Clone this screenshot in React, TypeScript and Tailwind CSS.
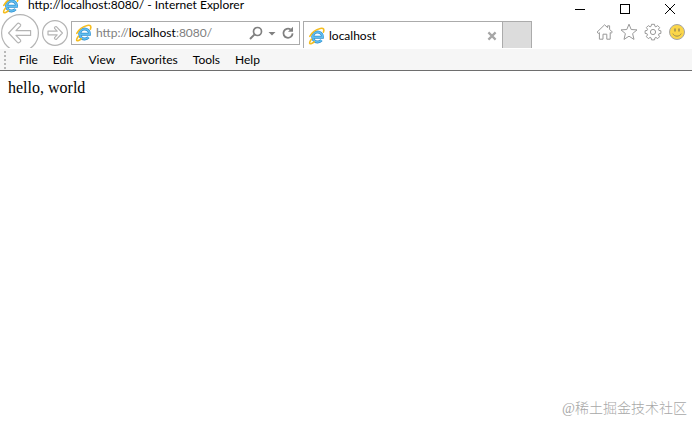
import type { ReactNode } from "react";

const MENUS = ["File", "Edit", "View", "Favorites", "Tools", "Help"];

/** Blue "e" with the yellow orbit around it. */
function BrowserLogo() {
  return (
    <svg viewBox="0 0 18 18" className="size-[18px] shrink-0" fill="none" aria-hidden="true">
      <path d="M14.6 10.3A5 5 0 1 0 13.5 13.1M5.4 10.3h10.4" stroke="#2f8fd0" strokeWidth="2.9" />
      <path d="M14.6 10.3A5 5 0 1 0 13.5 13.1M5.4 10.3h10" stroke="#62bff0" strokeWidth="1.5" />
      <path
        d="M3.4 12.2C.8 15.6 1.1 17.5 3.6 16.5c1-.4 1.8-.9 2.6-1.6M1.8 9.4C4 5.2 8.6 2.3 12.3 1.5c3.4-.7 4.3.9 3.1 3.6"
        stroke="#f5bd1f"
        strokeWidth="1.6"
        strokeLinecap="round"
      />
    </svg>
  );
}

function WindowButton({ label, children }: { label: string; children: ReactNode }) {
  return (
    <button type="button" aria-label={label} className="flex h-[18px] w-[45px] items-center justify-center">
      <svg viewBox="0 0 12 12" className="size-3" fill="none" stroke="#000" shapeRendering="crispEdges">
        {children}
      </svg>
    </button>
  );
}

function ToolButton({ label, children }: { label: string; children: ReactNode }) {
  return (
    <button type="button" aria-label={label} className="size-[18px]">
      <svg viewBox="0 0 18 18" className="size-[18px]" fill="none" stroke="#999" strokeLinejoin="round">
        {children}
      </svg>
    </button>
  );
}

function AddressBar() {
  return (
    <div className="mt-[7px] ml-[3px] flex h-6 min-w-0 flex-1 items-center border border-[#ababab] bg-white pr-[3px] pl-[3px]">
      <BrowserLogo />
      <a href="http://localhost:8080/" className="ml-[3px] flex-1 text-[#808080]">
        http://<span className="text-black">localhost</span>:8080/
      </a>
      <button type="button" aria-label="Search" className="size-4">
        <svg viewBox="0 0 16 16" className="size-4" fill="none" stroke="#808080">
          <circle cx="9.5" cy="6.5" r="4" strokeWidth="1.7" />
          <path d="M6.6 9.4 2 14" strokeWidth="2" />
        </svg>
      </button>
      <button type="button" aria-label="Search options" className="size-4">
        <svg viewBox="0 0 16 16" className="size-4" fill="#808080">
          <path d="M4.5 7h7L8 10.5Z" />
        </svg>
      </button>
      <button type="button" aria-label="Refresh" className="size-4">
        <svg viewBox="0 0 16 16" className="size-4" fill="none" stroke="#808080">
          <path d="M10.6 4.4A4.6 4.6 0 1 0 12.6 8.4" strokeWidth="1.8" />
          <path d="M8 6.8h5v-5Z" fill="#808080" stroke="none" />
        </svg>
      </button>
    </div>
  );
}

export default function App() {
  return (
    <div className="flex min-h-screen flex-col bg-white font-['Lato','Noto_Sans',sans-serif] text-[12px] text-black">
      <header className="flex h-12">
        <div className="min-w-0 flex-1">
          <div className="flex h-[10px] items-center gap-2 pl-[2px] leading-[14px] whitespace-nowrap">
            <BrowserLogo />
            <h1>http://localhost:8080/ - Internet Explorer</h1>
          </div>
          <nav className="mt-1 flex h-[34px] items-start overflow-hidden pr-[25px] pl-px">
            <button type="button" aria-label="Back" className="shrink-0">
              <svg viewBox="0 0 38 38" className="size-[38px]" fill="none" stroke="#b4b4b4" strokeWidth="1.2">
                <circle cx="19" cy="19" r="18.4" />
                <path
                  d="M7.6 19 16.4 9.6c1-1 4 .6 3.2 2.2L15 16.6h14.6v4.8H15l4.6 4.8c.8 1.6-2.2 3.2-3.2 2.2Z"
                  strokeLinejoin="round"
                />
              </svg>
            </button>
            <button type="button" aria-label="Forward" className="mt-[6px] ml-[3px] shrink-0">
              <svg viewBox="0 0 26 26" className="size-[26px]" fill="none" stroke="#b4b4b4" strokeWidth="1.2">
                <circle cx="13" cy="13" r="12.4" />
                <path
                  d="M20.4 13 14.6 6.8c-1-.8-2.6.4-2 1.6l2.6 2.8H6v3.6h9.2l-2.6 2.8c-.6 1.2 1 2.4 2 1.6Z"
                  strokeLinejoin="round"
                />
              </svg>
            </button>
            <AddressBar />
            <div className="mt-[7px] ml-[3px] flex h-[27px] w-[199px] items-center border-t border-l border-[#ababab] pt-px pr-[2px] pl-1">
              <BrowserLogo />
              <span className="ml-[3px] flex-1">localhost</span>
              <button type="button" aria-label="Close tab" className="flex size-4 items-center justify-center">
                <svg viewBox="0 0 10 10" className="size-[10px]" stroke="#a6a6a6" strokeWidth="2.2">
                  <path d="m1.4 1.4 7.2 7.2M8.6 1.4 1.4 8.6" />
                </svg>
              </button>
            </div>
            <button
              type="button"
              aria-label="New tab"
              className="mt-[7px] h-[27px] w-[30px] border-x border-t border-[#ababab] bg-[#dcdcdc]"
            />
          </nav>
        </div>
        <div className="w-[135px] shrink-0">
          <div className="flex">
            <WindowButton label="Minimize">
              <path d="M1 6.5h10" />
            </WindowButton>
            <WindowButton label="Maximize">
              <path d="M1.5 1.5h9v9h-9Z" />
            </WindowButton>
            <WindowButton label="Close">
              <path d="m1 1 10 10M11 1 1 11" shapeRendering="auto" />
            </WindowButton>
          </div>
          <div className="mt-[5px] flex justify-end gap-[6px] pr-[6px]">
            <ToolButton label="Home">
              <path d="M1 9.2 8.6 1.8l3 2.8V2.8h2v3.7L16.4 9l-1.3 1.2-.9-.6v6.6h-3.4v-5H7v5H3.4V9.6l-1 .8Z" />
            </ToolButton>
            <ToolButton label="Favorites">
              <path d="m9 1.2 2.2 5.3 5.8.4-4.4 3.7 1.4 5.8L9 13.2l-5 3.2 1.4-5.8L1 6.9l5.8-.4Z" />
            </ToolButton>
            <ToolButton label="Settings">
              <path d="M7.5 1.3h3l.4 2 1 .5 1.8-1.2 1.9 1.9-1.1 1.8.4 1.1 2 .4v2.6l-2 .4-.4 1.1 1.1 1.8-1.9 1.9-1.8-1.2-1 .5-.4 2h-3l-.4-2-1-.5-1.8 1.2-1.9-1.9 1.1-1.8-.4-1.1-2-.4V7.8l2-.4.4-1.1-1.1-1.8 1.9-1.9 1.8 1.2 1-.5Z" />
              <circle cx="9" cy="9" r="2.6" />
            </ToolButton>
            <ToolButton label="Send feedback">
              <circle cx="9" cy="9" r="7.5" fill="#fbd649" stroke="#a5a5a5" />
              <path d="M7 5.5v3M11 5.5v3" stroke="#9a8a50" strokeWidth="1.5" />
              <path d="M4.8 10.6c1.6 3.4 6.8 3.4 8.4 0" stroke="#9a8a50" />
            </ToolButton>
          </div>
        </div>
      </header>

      <div className="mt-px flex h-[22px] items-center border-b border-[#6e6e6e] bg-[#f6f6f6] pl-1">
        <div className="h-[18px] border-l-2 border-dotted border-[#b8b8b8]" />
        <div className="ml-[13px] flex gap-[15px]">
          {MENUS.map((menu) => (
            <button key={menu} type="button">
              {menu}
            </button>
          ))}
        </div>
      </div>

      <main className="flex flex-1 flex-col justify-between">
        <p className="px-2 pt-2 font-['Liberation_Serif',serif] text-[16px] leading-[18px]">hello, world</p>
        <p className="pr-[5px] pb-[3px] text-right font-['Liberation_Serif','Noto_Sans_CJK_SC',sans-serif] text-[14px] leading-[18px] font-light text-[#a8a8a8]">
          @稀土掘金技术社区
        </p>
      </main>
    </div>
  );
}
